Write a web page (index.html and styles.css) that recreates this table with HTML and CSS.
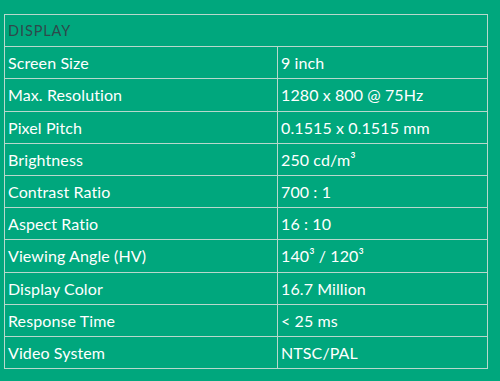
FILE: index.html
```html
<!DOCTYPE html>
<html>
<head>
<meta charset="utf-8">
<link rel="stylesheet" href="styles.css">
</head>
<body>
<table class="spec">
  <tr class="head"><th colspan="2">DISPLAY</th></tr>
  <tr><td class="k">Screen Size</td><td>9 inch</td></tr>
  <tr><td class="k">Max. Resolution</td><td>1280 x 800 @ 75Hz</td></tr>
  <tr><td class="k">Pixel Pitch</td><td>0.1515 x 0.1515 mm</td></tr>
  <tr><td class="k">Brightness</td><td>250 cd/m³</td></tr>
  <tr><td class="k">Contrast Ratio</td><td>700 : 1</td></tr>
  <tr><td class="k">Aspect Ratio</td><td>16 : 10</td></tr>
  <tr><td class="k">Viewing Angle (HV)</td><td>140³ / 120³</td></tr>
  <tr><td class="k">Display Color</td><td>16.7 Million</td></tr>
  <tr><td class="k">Response Time</td><td>&lt; 25 ms</td></tr>
  <tr><td class="k">Video System</td><td>NTSC/PAL</td></tr>
</table>
</body>
</html>
```
FILE: styles.css
```css
html, body {
  margin: 0;
  background: #00a77d;
}
body {
  padding: 14px 0 0 4px;
  font-family: Lato, "Open Sans", sans-serif;
  color: #ffffff;
}
.spec {
  border-collapse: collapse;
  width: 484px;
}
.spec th, .spec td {
  border: 1px solid #b8d8cc;
  height: 31.2px;
  padding: 0 0 0 3px;
  text-align: left;
  font-size: 16px;
  font-weight: 400;
  letter-spacing: 0.1px;
  vertical-align: middle;
}
.spec td.k {
  width: 269px;
}
.head th {
  color: #2e4a4c;
  font-size: 14.5px;
  letter-spacing: 0.9px;
}
```
